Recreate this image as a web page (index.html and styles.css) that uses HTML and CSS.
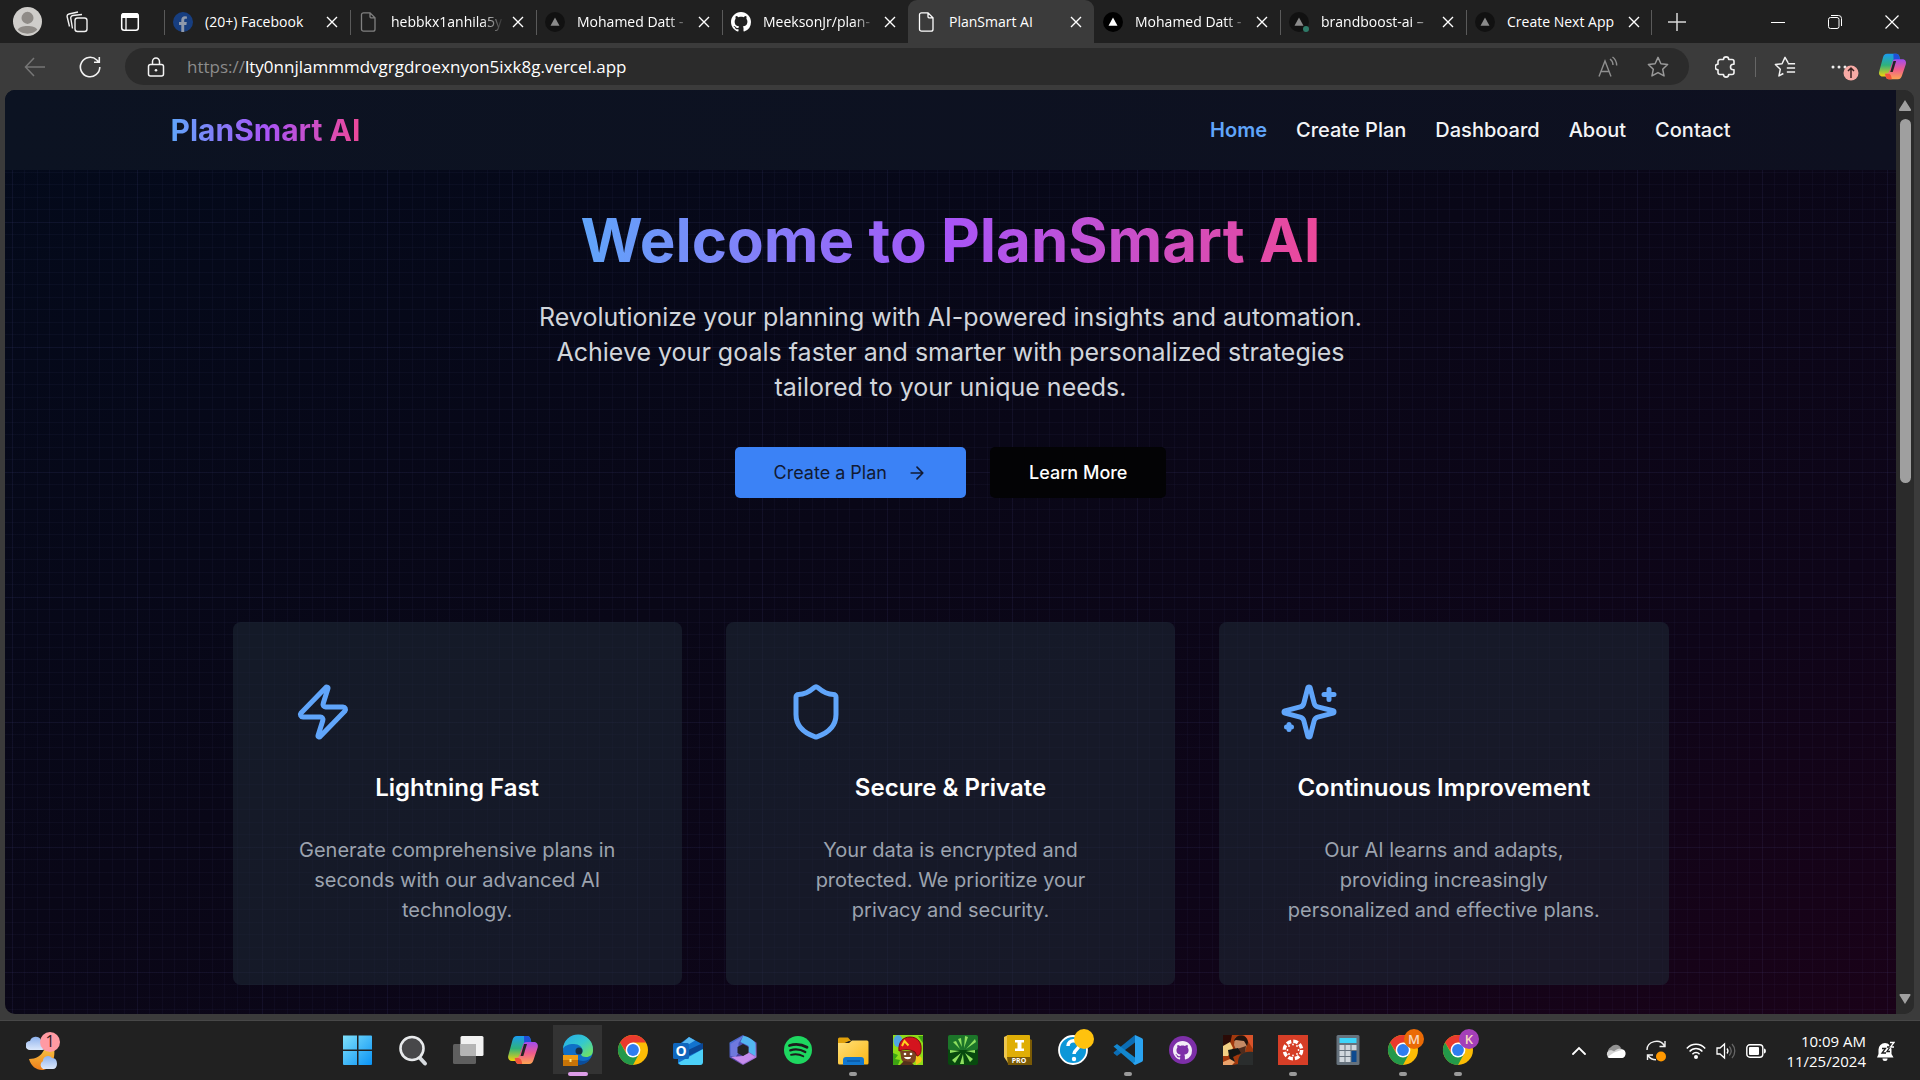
FILE: index.html
```html
<!DOCTYPE html>
<html lang="en">
<head>
<meta charset="utf-8">
<meta name="viewport" content="width=device-width, initial-scale=1">
<title>PlanSmart AI</title>
<link rel="stylesheet" href="styles.css">
</head>
<body>
<svg class="defs" aria-hidden="true">
  <defs>
    <linearGradient id="cp-a" x1="0" y1="0" x2="0" y2="1"><stop offset="0" stop-color="#1a9bf0"/><stop offset=".5" stop-color="#2fb27c"/><stop offset="1" stop-color="#f4d20c"/></linearGradient>
    <linearGradient id="cp-b" x1="0" y1="0" x2="0" y2="1"><stop offset="0" stop-color="#a04cf0"/><stop offset=".5" stop-color="#ee5a8e"/><stop offset="1" stop-color="#fda652"/></linearGradient>
    <linearGradient id="win" x1="0" y1="0" x2="1" y2="1"><stop offset="0" stop-color="#7fe0fb"/><stop offset="1" stop-color="#0a93f5"/></linearGradient>
    <linearGradient id="edge-a" x1="0" y1="0" x2="1" y2="1"><stop offset="0" stop-color="#27a9e8"/><stop offset=".5" stop-color="#33c8cf"/><stop offset="1" stop-color="#7ee84b"/></linearGradient>
    <linearGradient id="folder" x1="0" y1="0" x2="1" y2="1"><stop offset="0" stop-color="#ffe07a"/><stop offset="1" stop-color="#fbb714"/></linearGradient>
    <linearGradient id="m365" x1="0" y1="0" x2="1" y2="1"><stop offset="0" stop-color="#4a7fe6"/><stop offset=".5" stop-color="#4c3f9e"/><stop offset="1" stop-color="#c98af0"/></linearGradient>
    <linearGradient id="moon" x1="0" y1="0" x2="0" y2="1"><stop offset="0" stop-color="#f6c343"/><stop offset="1" stop-color="#ef7d1a"/></linearGradient>
    <linearGradient id="cloud" x1="0" y1="0" x2="0" y2="1"><stop offset="0" stop-color="#8fb3ee"/><stop offset="1" stop-color="#dce8fb"/></linearGradient>
  </defs>
  <symbol id="i-close" viewBox="0 0 12 12"><path d="M1 1l10 10M11 1L1 11" fill="none" stroke="currentColor" stroke-width="1.4"/></symbol>
  <symbol id="i-page" viewBox="0 0 20 20"><path d="M4.500 .8h6.500l5 5v11.400a2 2 0 0 1-2 2h-9.500a2 2 0 0 1-2-2v-14.400a2 2 0 0 1 2-2zM11 1v3.800a1 1 0 0 0 1 1h4" fill="none" stroke="currentColor" stroke-width="1.300"/></symbol>
  <symbol id="i-vercel" viewBox="0 0 20 20"><circle cx="10" cy="10" r="10" fill="#111"/><path d="M10 5.500l4.500 8.200h-9z" fill="#8a8a8a"/></symbol>
  <symbol id="i-vercel-on" viewBox="0 0 20 20"><circle cx="10" cy="10" r="10" fill="#000"/><path d="M10 5.500l4.500 8.200h-9z" fill="#fff"/></symbol>
  <symbol id="i-github" viewBox="0 0 16 16"><path fill="currentColor" d="M8 0C3.580 0 0 3.580 0 8c0 3.540 2.290 6.530 5.470 7.590.4.070.55-.17.55-.38 0-.19-.01-.82-.01-1.490-2.010.37-2.530-.49-2.690-.94-.09-.23-.48-.94-.82-1.130-.28-.15-.68-.52-.01-.53.63-.01 1.080.58 1.230.82.72 1.210 1.870.87 2.330.66.070-.52.28-.87.51-1.070-1.780-.2-3.640-.89-3.640-3.950 0-.87.31-1.590.82-2.150-.08-.2-.36-1.020.08-2.120 0 0 .67-.21 2.200.82.64-.18 1.320-.27 2-.27s1.360.09 2 .27c1.530-1.040 2.200-.82 2.200-.82.44 1.100.16 1.920.08 2.120.51.56.82 1.270.82 2.150 0 3.070-1.870 3.750-3.650 3.950.29.25.54.73.54 1.480 0 1.070-.01 1.930-.01 2.200 0 .21.15.46.55.38A8.010 8.010 0 0 0 16 8c0-4.420-3.580-8-8-8z"/></symbol>
  <symbol id="i-copilot" viewBox="0 0 32 32">
    <path d="M10 2h10c2 0 3 1 3.500 3l1 4h-5c-2 0-3 1-3.500 3l-4 12c-.6 2-1.500 3-3.500 3H5c-3 0-4.500-2.500-3.700-5.500L5.500 6C6.300 3.300 7.500 2 10 2z" fill="url(#cp-a)"/>
    <path d="M17 2h3c2 0 3 1 3.500 3l1 4h-5c-1 0-1.800.3-2.300.8z" fill="#1f4fd8"/>
    <path d="M22 30H12c-2 0-3-1-3.500-3l-.8-3c3 0 4.300-1 5-3.500l3.300-9.700c.6-2 1.500-2.800 3.500-2.800h7.500c3 0 4.500 2.500 3.700 5.500L26.500 26C25.700 28.700 24.500 30 22 30z" fill="url(#cp-b)"/>
    <path d="M12 30c-2 0-3-1-3.500-3l-.8-3h3.500c2.500 0 3.500 2 4 6z" fill="#f0533a"/>
    <path d="M17 10l-3.500 12h2.800L20 10z" fill="#242424"/>
  </symbol>
  <symbol id="i-chrome" viewBox="0 0 32 32">
    <circle cx="16" cy="16" r="15" fill="#fbbc05"/>
    <path d="M3 8.500A15 15 0 0 1 29 8.500H16L10 19.500z" fill="#ea3a2e"/>
    <path d="M3 8.500A15 15 0 0 0 16 31l6.200-11.500L9.500 19.800z" fill="#23994a"/>
    <circle cx="16" cy="16" r="7.400" fill="#fff"/><circle cx="16" cy="16" r="5.900" fill="#2f7df0"/>
  </symbol>
</svg>

<header class="browser">
  <div class="tabstrip">
    <div class="strip-tools">
      <button class="bare" aria-label="Profile"><svg width="29" height="29" viewBox="0 0 28 28"><circle cx="14" cy="14" r="14" fill="#cfcdca"/><circle cx="14" cy="10.500" r="5.800" fill="#8f8b87"/><path d="M4.500 22c1.500-5 17.500-5 19 0a14 14 0 0 1-19 0z" fill="#8f8b87"/></svg></button>
      <button class="bare" aria-label="Workspaces"><svg width="22" height="22" viewBox="0 0 22 22" fill="none" stroke="#f0f0f0" stroke-width="1.400"><rect x="9" y="7" width="12" height="13.500" rx="2.500"/><path d="M6.500 17.500L4.800 7.500a2.500 2.500 0 0 1 2-3L16 3.500M3.500 15.500L1.200 6a2.500 2.500 0 0 1 1.800-3L12 1"/></svg></button>
      <button class="bare" aria-label="Tab actions"><svg width="20" height="20" viewBox="0 0 20 20"><rect x="1.700" y="1.700" width="16.600" height="16.600" rx="2.500" fill="none" stroke="#fff" stroke-width="1.500"/><path d="M1.500 3a2 2 0 0 1 2-2h13a2 2 0 0 1 2 2v3h-17z" fill="#fff"/><path d="M6 6v12" stroke="#fff" stroke-width="1.300"/></svg></button>
    </div>
    <nav class="tabs" aria-label="Open tabs">
      <div class="tab"><button class="tab-main"><svg class="fav" viewBox="0 0 20 20"><circle cx="10" cy="10" r="10" fill="#173e80"/><path d="M8.300 20v-7H6v-3h2.300V8c0-2.500 1.400-3.800 3.600-3.800l2 .2v2.400h-1.200c-1.200 0-1.500.7-1.500 1.500V10h2.600l-.4 3h-2.200v7z" fill="#8f99ab"/></svg><span class="tab-title">(20+) Facebook</span></button><button class="tab-x" aria-label="Close tab"><svg><use href="#i-close"/></svg></button></div>
      <div class="tab"><button class="tab-main"><svg class="fav dim"><use href="#i-page"/></svg><span class="tab-title faded">hebbkx1anhila5y</span></button><button class="tab-x" aria-label="Close tab"><svg><use href="#i-close"/></svg></button></div>
      <div class="tab"><button class="tab-main"><svg class="fav"><use href="#i-vercel"/></svg><span class="tab-title faded">Mohamed Datt -</span></button><button class="tab-x" aria-label="Close tab"><svg><use href="#i-close"/></svg></button></div>
      <div class="tab"><button class="tab-main"><svg class="fav"><use href="#i-github"/></svg><span class="tab-title faded">MeeksonJr/plan-</span></button><button class="tab-x" aria-label="Close tab"><svg><use href="#i-close"/></svg></button></div>
      <div class="tab active"><button class="tab-main"><svg class="fav"><use href="#i-page"/></svg><span class="tab-title">PlanSmart AI</span></button><button class="tab-x" aria-label="Close tab"><svg><use href="#i-close"/></svg></button></div>
      <div class="tab"><button class="tab-main"><svg class="fav"><use href="#i-vercel-on"/></svg><span class="tab-title faded">Mohamed Datt -</span></button><button class="tab-x" aria-label="Close tab"><svg><use href="#i-close"/></svg></button></div>
      <div class="tab"><button class="tab-main"><svg class="fav" viewBox="0 0 20 20"><circle cx="10" cy="10" r="10" fill="#111"/><path d="M10 5.500l4.500 8.200h-9z" fill="#8a8a8a"/><circle cx="17" cy="17" r="3" fill="#2e7a68"/></svg><span class="tab-title faded">brandboost-ai –</span></button><button class="tab-x" aria-label="Close tab"><svg><use href="#i-close"/></svg></button></div>
      <div class="tab"><button class="tab-main"><svg class="fav"><use href="#i-vercel"/></svg><span class="tab-title">Create Next App</span></button><button class="tab-x" aria-label="Close tab"><svg><use href="#i-close"/></svg></button></div>
    </nav>
    <button class="bare new-tab" aria-label="New tab"><svg width="18" height="18" viewBox="0 0 18 18"><path d="M9 0v18M0 9h18" stroke="#d8d8d8" stroke-width="1.500"/></svg></button>
    <div class="window-buttons">
      <button class="bare" aria-label="Minimize"><svg width="14" height="14" viewBox="0 0 14 14"><path d="M0 7.500h14" stroke="#fff"/></svg></button>
      <button class="bare" aria-label="Restore"><svg width="14" height="14" viewBox="0 0 14 14" fill="none" stroke="#fff"><rect x=".5" y="2.500" width="10.500" height="11" rx="2"/><path d="M3 .5h7.500a3 3 0 0 1 3 3V11"/></svg></button>
      <button class="bare" aria-label="Close"><svg width="14" height="14" viewBox="0 0 14 14"><path d="M.5.5l13 13M13.500.5l-13 13" stroke="#fff" stroke-width="1.200"/></svg></button>
    </div>
  </div>

  <div class="toolbar">
    <button class="bare back" aria-label="Back"><svg width="22" height="20" viewBox="0 0 22 20" fill="none" stroke="#767676" stroke-width="1.500"><path d="M21 10H1.500M10 1L1.500 10l8.500 9"/></svg></button>
    <button class="bare refresh" aria-label="Refresh"><svg width="22" height="22" viewBox="0 0 22 22" fill="none" stroke="#f2f2f2" stroke-width="1.600"><path d="M20.800 11a9.700 9.700 0 1 1-3-7l2 2M20.300 1v5.300H15"/></svg></button>
    <form class="address">
      <button type="button" class="bare lock" aria-label="Site information"><svg width="18" height="20" viewBox="0 0 18 20" fill="none" stroke="#f4f4f4" stroke-width="1.500"><rect x="1.500" y="7.500" width="15" height="11.500" rx="2"/><path d="M5.500 7.500V4.500a3.500 3.500 0 0 1 7 0v3"/><circle cx="9" cy="13.300" r="1.300" fill="#f4f4f4" stroke="none"/></svg></button>
      <label for="url">https://</label>
      <input id="url" type="text" value="lty0nnjlammmdvgrgdroexnyon5ixk8g.vercel.app">
      <button type="button" class="bare" aria-label="Read aloud"><svg width="20" height="22" viewBox="0 0 20 22" fill="none" stroke="#8e8e8e" stroke-width="1.400"><path d="M1 20.500L7 5l6 15.500M3 15.500h8M12 3c2 1.500 3 3.300 3 6M14.500 1c3 2.200 4.200 5 4.200 8.500"/></svg></button>
      <button type="button" class="bare" aria-label="Add to favorites"><svg width="22" height="22" viewBox="0 0 24 24" fill="none" stroke="#9a9a9a" stroke-width="1.600" stroke-linejoin="round"><path d="M12 1.500l3.200 6.900 7.300.9-5.400 5.100 1.500 7.400L12 18.100l-6.600 3.700 1.500-7.400L1.500 9.300l7.300-.9z"/></svg></button>
    </form>
    <div class="actions">
      <button class="bare" aria-label="Extensions"><svg width="22" height="24" viewBox="0 0 22 24" fill="none" stroke="#f2f2f2" stroke-width="1.600" stroke-linejoin="round"><path d="M5 4.500h3.500a2.600 2.600 0 0 1 5.200 0h3.300a2 2 0 0 1 2 2v2.800h-.8a2.700 2.700 0 0 0 0 5.400h.8v2.800a2 2 0 0 1-2 2h-3.300a2.600 2.600 0 0 1-5.200 0H5a2 2 0 0 1-2-2v-2.800a2.700 2.700 0 0 1 0-5.400V6.500a2 2 0 0 1 2-2z"/></svg></button>
      <span class="rule"></span>
      <button class="bare" aria-label="Favorites"><svg width="22" height="22" viewBox="0 0 24 24" fill="none" stroke="#f2f2f2" stroke-width="1.600" stroke-linejoin="round"><path d="M15.500 7.500L12 1.500 8.800 8.400l-7.300.9 5.400 5.100-1.500 7.400 4.800-2.700M15 8.500h8M14 13h9M14 17.500h9"/></svg></button>
      <button class="bare more" aria-label="Settings and more"><svg width="28" height="28" viewBox="0 0 28 28"><circle cx="2" cy="14" r="1.500" fill="#eee"/><circle cx="8" cy="14" r="1.500" fill="#eee"/><circle cx="14" cy="14" r="1.500" fill="#eee"/><circle cx="20" cy="20" r="7.500" fill="#f7aaa5"/><path d="M20 25v-9.500M17 18l3-3 3 3" fill="none" stroke="#3b2222" stroke-width="1.500"/></svg></button>
      <button class="bare" aria-label="Copilot"><svg width="29" height="29"><use href="#i-copilot"/></svg></button>
    </div>
  </div>
</header>

<div class="viewport">
  <div class="site">
    <header class="site-header">
      <div class="site-header-inner">
        <a class="logo gradient" href="#">PlanSmart AI</a>
        <nav class="site-nav" aria-label="Main">
          <a class="current" href="#">Home</a>
          <a href="#">Create Plan</a>
          <a href="#">Dashboard</a>
          <a href="#">About</a>
          <a href="#">Contact</a>
        </nav>
      </div>
    </header>
    <main>
      <section class="hero">
        <h1 class="gradient">Welcome to PlanSmart AI</h1>
        <p>Revolutionize your planning with AI-powered insights and automation. Achieve your goals faster and smarter with personalized strategies tailored to your unique needs.</p>
        <div class="cta">
          <button class="btn primary">Create a Plan <svg width="20" height="20" viewBox="0 0 24 24" fill="none" stroke="currentColor" stroke-width="2" stroke-linecap="round" stroke-linejoin="round"><path d="M5 12h14M12 5l7 7-7 7"/></svg></button>
          <button class="btn dark">Learn More</button>
        </div>
      </section>
      <section class="cards">
        <article class="card">
          <svg viewBox="0 0 24 24"><path d="M4 14a1 1 0 0 1-.78-1.630l9.900-10.200a.5.5 0 0 1 .86.460l-1.920 6.020A1 1 0 0 0 13 10h7a1 1 0 0 1 .78 1.630l-9.900 10.200a.5.5 0 0 1-.86-.460l1.920-6.020A1 1 0 0 0 11 14z"/></svg>
          <h2>Lightning Fast</h2>
          <p>Generate comprehensive plans in seconds with our advanced AI technology.</p>
        </article>
        <article class="card">
          <svg viewBox="0 0 24 24"><path d="M20 13c0 5-3.500 7.500-7.660 8.950a1 1 0 0 1-.67-.01C7.500 20.500 4 18 4 13V6a1 1 0 0 1 1-1c2 0 4.500-1.200 6.240-2.720a1.170 1.170 0 0 1 1.520 0C14.510 3.810 17 5 19 5a1 1 0 0 1 1 1z"/></svg>
          <h2>Secure &amp; Private</h2>
          <p>Your data is encrypted and protected. We prioritize your privacy and security.</p>
        </article>
        <article class="card">
          <svg viewBox="0 0 24 24"><path d="M9.937 15.500A2 2 0 0 0 8.500 14.063l-6.135-1.582a.5.5 0 0 1 0-.962L8.500 9.936A2 2 0 0 0 9.937 8.500l1.582-6.135a.5.5 0 0 1 .963 0L14.063 8.500A2 2 0 0 0 15.500 9.937l6.135 1.581a.5.5 0 0 1 0 .964L15.500 14.063a2 2 0 0 0-1.437 1.437l-1.582 6.135a.5.5 0 0 1-.963 0zM20 3v4M22 5h-4M4 17v2M5 18H3"/></svg>
          <h2>Continuous Improvement</h2>
          <p>Our AI learns and adapts, providing increasingly personalized and effective plans.</p>
        </article>
      </section>
    </main>
  </div>
  <div class="scrollbar" aria-hidden="true">
    <svg width="12" height="11" viewBox="0 0 12 11"><path d="M6 0l6 9.500a1 1 0 0 1-1 1.500H1a1 1 0 0 1-1-1.500z" fill="#a0a0a0"/></svg>
    <div class="track"><div class="thumb"></div></div>
    <svg width="12" height="10" viewBox="0 0 12 11"><path d="M6 11l6-9.500A1 1 0 0 0 11 0H1a1 1 0 0 0-1 1.500z" fill="#a0a0a0"/></svg>
  </div>
</div>

<footer class="taskbar">
  <div class="widgets">
    <button class="bare" aria-label="Weather"><svg width="36" height="44" viewBox="0 0 36 44"><path d="M3 30c7 0 12-3 15-9l10-2c2 12-4 22-12 22-6 0-11-4-13-11z" fill="url(#moon)"/><path d="M4 21a4.500 4.500 0 0 1 0-9 6 6 0 0 1 11-1c4 0 5 2 5 5s-2 5-4 5z" fill="url(#cloud)"/><path d="M17 40a4.500 4.500 0 0 1 0-8 5 5 0 0 1 9-3c4 0 5 3 5 6s-2 5-4 5z" fill="url(#cloud)"/><circle cx="24" cy="13" r="10" fill="#ff9aa3"/><text x="24" y="18" text-anchor="middle" class="badge-num">1</text></svg></button>
  </div>
  <div class="apps">
    <button class="app" aria-label="Start"><svg viewBox="0 0 32 32"><path fill="url(#win)" d="M1 1.500h14v14H1zM16.500 1.500H29a1 1 0 0 1 1 1v13H16.500zM1 17h14v14H2a1 1 0 0 1-1-1zM16.500 17H30v13a1 1 0 0 1-1 1H16.500z"/></svg></button>
    <button class="app" aria-label="Search"><svg viewBox="0 0 32 32"><path d="M22 23l6 6.500" stroke="#d6dade" stroke-width="4" stroke-linecap="round"/><circle cx="15" cy="14.500" r="11.500" fill="#48484a" stroke="#e8eaec" stroke-width="2.600"/></svg></button>
    <button class="app" aria-label="Task view"><svg viewBox="0 0 32 32"><rect x="1" y="10" width="23" height="20" rx="1.500" fill="#5f5f5f"/><rect x="8.500" y="2" width="23" height="20" rx="1.500" fill="#f2f2f2"/><path d="M8.500 10H24v12H9.500a1 1 0 0 1-1-1z" fill="#b5b5b5"/></svg></button>
    <button class="app" aria-label="Copilot"><svg><use href="#i-copilot"/></svg></button>
    <button class="app running focused" aria-label="Microsoft Edge"><svg viewBox="0 0 32 32"><circle cx="16" cy="16" r="15" fill="#0f6fc6"/><path d="M1 15a15 15 0 0 1 30 1c0 5-3 7-7 7-3 0-5-1-5-3 1-1 1.500-2 1.500-3.500C20.500 13 17 10 12 10 6 10 2 12 1 15z" fill="url(#edge-a)"/><path d="M13 20c0 4 3 7 8 7 3 0 5-1 7.500-2.500C26 29 21 31 16 31l-5-6z" fill="#0b4d9b"/><circle cx="17" cy="17" r="3.500" fill="#16324a"/><rect x="1" y="21" width="15" height="11" fill="#c87408"/><path d="M1 21h15v5H1z" fill="#ed9c14"/><rect x="7.500" y="25" width="2" height="3" fill="#ffe27a"/></svg></button>
    <button class="app" aria-label="Chrome"><svg><use href="#i-chrome"/></svg></button>
    <button class="app" aria-label="Outlook"><svg viewBox="0 0 32 32"><path d="M6 11L17 3l13 7v19a2 2 0 0 1-2 2H9a3 3 0 0 1-3-3z" fill="#1273cf"/><path d="M9 10l8-7 6 3.500L9 15z" fill="#57b8f2"/><path d="M14 17l17-8v6L14 23z" fill="#0a4796"/><path d="M6 29l25-14v13a3 3 0 0 1-3 3H9z" fill="#4cd0f8"/><rect x="1" y="9" width="16" height="16" rx="1.500" fill="#0f66bd"/><text x="9" y="22" text-anchor="middle" class="app-letter">O</text></svg></button>
    <button class="app" aria-label="Microsoft 365"><svg viewBox="0 0 32 32"><path d="M16 2l12.500 7v14L16 30 3.500 23V9z" fill="url(#m365)" stroke="url(#m365)" stroke-width="2" stroke-linejoin="round"/><path d="M16 2c5 0 12.500 5 12.500 8v12l-7-4v-6l-8-4z" fill="#52b6f0"/><path d="M3.500 10v12l5 1 3-4V9L16 2z" fill="#6f79dd"/><path d="M4 23l12 7 12-7-7-5-5 4z" fill="#c68cec"/><path d="M16 10l5.500 3v6L16 22l-5.500-3v-6z" fill="#242424"/></svg></button>
    <button class="app" aria-label="Spotify"><svg viewBox="0 0 32 32"><circle cx="16" cy="16" r="14" fill="#1ed760"/><g fill="none" stroke="#1c1c1c" stroke-linecap="round"><path d="M7.500 11.500c6-1.800 12.500-1 17.500 1.800" stroke-width="2.800"/><path d="M8.300 16.300c5-1.500 10.500-.8 15 1.700" stroke-width="2.300"/><path d="M9 20.800c4.500-1.200 8.500-.7 12.300 1.500" stroke-width="1.900"/></g></svg></button>
    <button class="app running" aria-label="File Explorer"><svg viewBox="0 0 32 32"><path d="M1 5a1.500 1.500 0 0 1 1.500-1.500H11l3 3.500h-2L1 12z" fill="#e0a00a"/><path d="M1 9h11l3-2.500h15A1.500 1.500 0 0 1 31.500 8v21a1.500 1.500 0 0 1-1.500 1.500H2.500A1.500 1.500 0 0 1 1 29z" fill="url(#folder)"/><path d="M6 31v-5a3 3 0 0 1 3-3h15a3 3 0 0 1 3 3v5z" fill="#1177cf"/><path d="M10 27h13" stroke="#0a4f98" stroke-width="1.200"/></svg></button>
    <button class="app" aria-label="Bloons TD"><svg viewBox="0 0 32 32"><path d="M1 1h30v30H1z" fill="#8fdc18"/><path d="M1 19l5 2-3 4 5 1-2 5H1zM26 2h5v7z" fill="#3da313"/><ellipse cx="6" cy="7" rx="4.500" ry="6" fill="#4fa5e4"/><path d="M23 22c6-1 8 2 6 6l-5 3z" fill="#f5c518"/><path d="M8 17h16v6c0 5-3 7-7 7s-8-3-8-7z" fill="#7a4423"/><path d="M12 23h7c0 3-6 3-7 0z" fill="#fff"/><circle cx="13" cy="20" r="1.300" fill="#fff"/><circle cx="19" cy="20" r="1.300" fill="#fff"/><path d="M7 17C6 8 11 3 18 3c8 0 12 6 11 13 0 4-2 6-4 6l-2-4C18 15 12 15 7 17z" fill="#d4141e" stroke="#7d0710"/><path d="M10 12l2.500-5 4 4.500" fill="none" stroke="#ffd21f" stroke-width="2"/><path d="M8 31l4-4 7 1 3 3z" fill="#54301b"/></svg></button>
    <button class="app" aria-label="Green burst"><svg viewBox="0 0 32 32"><rect x="1" y="1" width="30" height="30" rx="2" fill="#07490e"/><rect x="1" y="1" width="30" height="15" rx="2" fill="#1c7529"/><path fill="#8fe05f" d="M17 14l1-12 3 1zM19 15l9-10 1 3zM19 17l9-1v3zM18 19l8 6-3 3zM16 20l1 10h-4zM14 19l-6 10-3-3zM13 17l-10 2v-3zM13 15L6 8l3-1zM15 13L11 5l3-1z"/></svg></button>
    <button class="app" aria-label="Inventor Pro"><svg viewBox="0 0 32 32"><path d="M2 3l4-2v28l-4-6z" fill="#eec64d"/><path d="M6 1h21a1 1 0 0 1 1 1v21H5V2z" fill="#dfae06"/><path d="M28 5l2 1v25H6l-1-8h23z" fill="#7a5a05"/><path d="M13 6h9v2.500h-2.500v6H22V17h-9v-2.500h2.500v-6H13z" fill="#fff"/><text x="17" y="29" text-anchor="middle" class="pro-letter">PRO</text></svg></button>
    <button class="app" aria-label="Help"><svg viewBox="0 0 32 32"><circle cx="16" cy="16" r="14" fill="#0d97d8" stroke="#fff" stroke-width="1.800"/><path d="M11 12c0-7 11-7 11-.5 0 4-5 4-5 8.500" fill="none" stroke="#fff" stroke-width="3.500"/><circle cx="17" cy="25" r="2.200" fill="#fff"/><circle cx="27" cy="5" r="10" fill="#ffc20e"/></svg></button>
    <button class="app running" aria-label="Visual Studio Code"><svg viewBox="0 0 32 32"><path d="M2 19.500l3 2.500L23 8.500V1L1.500 18.500z" fill="#0b6db5"/><path d="M1.500 12.500L5 10l18 13.500V31z" fill="#1387cf"/><path d="M23 1l6.500 3a2 2 0 0 1 1.500 2v20a2 2 0 0 1-1.500 2L23 31l-2-2 2-1z" fill="#2aa3f1"/></svg></button>
    <button class="app" aria-label="GitHub Desktop"><svg viewBox="0 0 32 32"><circle cx="16" cy="16" r="14" fill="#7d2fa8"/><svg x="6" y="7" width="19" height="19" color="#f2edf7"><use href="#i-github"/></svg></svg></button>
    <button class="app" aria-label="Shooter game"><svg viewBox="0 0 32 32"><path d="M1 1h30v30H1z" fill="#a2380c"/><path d="M1 1h9L7 14 1 20z" fill="#2a0a06"/><path d="M22 1h9v14z" fill="#d9532a"/><path d="M1 12l7-4 3 6-5 8H1z" fill="#f2cf83"/><path d="M16 30c0-9 4-13 15-12v13H10z" fill="#2a2d2d"/><path d="M13 4c6-4 13-1 12 6l-2 8-7 2-4-9z" fill="#c58a64"/><path d="M12 7c1-7 13-8 14 1l-1 4-3-5-8-1z" fill="#21140e"/><path d="M15 15l9-3-1 7-7 2z" fill="#4e2c1d"/><path d="M6 16l10-2 3 5-8 4 2 5-4 1-2-7z" fill="#141614"/><path d="M1 28l7-3 5 3-3 3H1z" fill="#eaa26b"/></svg></button>
    <button class="app running" aria-label="Canvas"><svg viewBox="0 0 32 32"><path d="M1 1h30v30H1z" fill="#d63e27"/><circle cx="16" cy="16" r="8.700" fill="none" stroke="#fff" stroke-width="3.400" stroke-dasharray="4.800 2.033"/><g fill="#fff"><circle cx="16" cy="10.500" r=".9"/><circle cx="16" cy="21.500" r=".9"/><circle cx="10.500" cy="16" r=".9"/><circle cx="21.500" cy="16" r=".9"/><circle cx="12" cy="12" r=".9"/><circle cx="20" cy="12" r=".9"/><circle cx="12" cy="20" r=".9"/><circle cx="20" cy="20" r=".9"/></g></svg></button>
    <button class="app" aria-label="Calculator"><svg viewBox="0 0 32 32"><rect x="4.500" y="1" width="23" height="30" rx="1.500" fill="#66727d"/><rect x="7.500" y="4" width="17" height="5" fill="#3cd5fa"/><path fill="#d0d7dd" d="M7.500 11h5v5h-5zM13.500 11h5v5h-5zM19.500 11h5v5h-5zM7.500 17h5v5h-5zM13.500 17h5v5h-5zM7.500 23h5v5h-5zM13.500 23h5v5h-5z"/><path d="M19.500 17h5v11h-5z" fill="#0d4a8f"/></svg></button>
    <button class="app running" aria-label="Chrome, profile M"><svg viewBox="0 0 32 32"><use href="#i-chrome"/><circle cx="27" cy="5" r="10" fill="#ea6a05"/><text x="27" y="10" text-anchor="middle" class="badge-letter">M</text></svg></button>
    <button class="app running" aria-label="Chrome, profile K"><svg viewBox="0 0 32 32"><use href="#i-chrome"/><circle cx="27" cy="5" r="10" fill="#a43fb8"/><text x="27" y="10" text-anchor="middle" class="badge-letter">K</text></svg></button>
  </div>
  <div class="tray">
    <button class="bare" aria-label="Hidden icons"><svg width="14" height="10" viewBox="0 0 14 10"><path d="M1 8l6-6 6 6" fill="none" stroke="#fff" stroke-width="1.800" stroke-linecap="round"/></svg></button>
    <button class="bare" aria-label="OneDrive"><svg width="20" height="14" viewBox="0 0 20 14"><path d="M2.500 10A5 5 0 0 1 5 3a6 6 0 0 1 10 1l-7 5z" fill="#929292"/><path d="M4 14a4 4 0 0 1-1-7.500c2-.8 4 0 5 1 3-3 7-4 8.500-2A4.500 4.500 0 0 1 16 14z" fill="#d4d4d4"/><path d="M8 8.500L17 5.600A4.500 4.500 0 0 1 16 14H4a4 4 0 0 1-2.500-1z" fill="#fff"/></svg></button>
    <button class="bare" aria-label="Windows Update"><svg width="20" height="22" viewBox="0 0 20 22" fill="none" stroke="#f2f2f2" stroke-width="1.400"><path d="M1 10c0-9 13-12 17.500-4M19 1v5.500h-5.500M1.500 20v-5H7M2 15.500c2 3 4.500 4.300 8 4.300"/><circle cx="15" cy="16.500" r="5" fill="#ff9800" stroke="none"/></svg></button>
    <button class="bare system" aria-label="Network, volume and battery">
      <svg width="20" height="16" viewBox="0 0 20 16" fill="none" stroke="#fff" stroke-width="1.500"><path d="M.8 5.500c5-5.600 13.400-5.600 18.400 0M3.600 8.500c3.600-4 9.200-4 12.800 0M6.400 11.300c2.200-2.300 5-2.300 7.200 0"/><circle cx="10" cy="14" r="2" fill="#fff" stroke="none"/></svg>
      <svg width="20" height="18" viewBox="0 0 20 18" fill="none" stroke="#fff" stroke-width="1.300"><path d="M1 6h3l4.500-4v14L4 12H1zM11 6.500c1.200 1.500 1.200 3.500 0 5"/><path d="M13.300 4.500c2.400 2.800 2.400 6.200 0 9M16 2c3.700 4 3.700 10 0 14" stroke="#666"/></svg>
      <svg width="20" height="14" viewBox="0 0 20 14"><rect x=".8" y=".8" width="16" height="12.400" rx="3" fill="none" stroke="#fff" stroke-width="1.400"/><rect x="3" y="3" width="10" height="8" rx="1" fill="#fff"/><path d="M18 4.500c2.500 0 2.500 5 0 5z" fill="#fff"/></svg>
    </button>
    <time class="clock" datetime="2024-11-25T10:09"><span>10:09 AM</span><span>11/25/2024</span></time>
    <button class="bare" aria-label="Notifications"><svg width="18" height="20" viewBox="0 0 18 20"><path d="M1.500 8.500a6.500 6.500 0 0 1 13 0V13l2 3.500H0L1.500 13z" fill="#fff"/><path d="M5.500 17.500h5a2.500 2.500 0 0 1-5 0z" fill="#fff"/><path d="M11 0h7v7h-5z" fill="#212121"/><path d="M5 7.500h3.500L5 12h4M10 6h3L10 10.500h3" fill="none" stroke="#1c1c1c" stroke-width="1.300"/><path d="M13 1.500h4L13.500 6H17" fill="none" stroke="#fff" stroke-width="1.300"/></svg></button>
  </div>
</footer>
</body>
</html>
```
FILE: styles.css
```css
* { box-sizing: border-box; }

body {
  margin: 0;
  height: 100vh;
  display: flex;
  flex-direction: column;
  overflow: hidden;
  background: #3b3b3b;
  color: #fff;
  font-family: "Open Sans", "Noto Sans", sans-serif;
}

.defs { position: absolute; width: 0; height: 0; }
svg { display: block; flex: none; }
button { font: inherit; color: inherit; cursor: pointer; }
a { color: inherit; text-decoration: none; }

.bare {
  display: flex;
  align-items: center;
  justify-content: center;
  padding: 0;
  border: 0;
  background: none;
}

/* Tab strip */
.tabstrip { display: flex; height: 43px; background: #202020; }
.strip-tools { display: grid; grid-template-columns: 54px 46px 60px; padding-right: 4px; }
.tabs { display: flex; min-width: 0; }

.tab {
  display: flex;
  align-items: center;
  width: 186px;
  min-width: 0;
  padding: 0 12px 0 9px;
  background: linear-gradient(#5a5a5a, #5a5a5a) 0 10px / 1px 25px no-repeat;
}
.tab:last-child {
  background:
    linear-gradient(#5a5a5a, #5a5a5a) 0 10px / 1px 25px no-repeat,
    linear-gradient(#5a5a5a, #5a5a5a) 100% 10px / 1px 25px no-repeat;
}
.tab.active { background: #3b3b3b; border-radius: 9px 9px 0 0; }
.tab.active + .tab { background: none; }

.tab-main {
  flex: 1;
  min-width: 0;
  display: flex;
  align-items: center;
  gap: 12px;
  padding: 0;
  border: 0;
  background: none;
  text-align: left;
}
.fav { width: 20px; height: 20px; }
.fav.dim { color: #808080; }
.tab-title {
  flex: 1;
  overflow: hidden;
  white-space: nowrap;
  font-size: 14px;
  line-height: 20px;
}
.tab-title.faded { mask-image: linear-gradient(90deg, #000 80%, transparent); }
.tab-x { padding: 0 0 0 8px; border: 0; background: none; }
.tab-x svg { width: 12px; height: 12px; }
.new-tab { width: 50px; }
.window-buttons { display: grid; grid-template-columns: repeat(3, 57px); margin-left: auto; }

/* Toolbar */
.toolbar { display: flex; align-items: center; height: 47px; background: #3b3b3b; }
.toolbar .back { width: 69px; height: 40px; }
.toolbar .refresh { width: 42px; height: 40px; margin-right: 14px; }

.address {
  flex: 1;
  display: flex;
  align-items: center;
  height: 37px;
  padding-right: 20px;
  border-radius: 19px;
  background: #2b2b2b;
  font-size: 17px;
}
.address .lock { width: 62px; }
.address label { color: #8c8c8c; }
.address input {
  flex: 1;
  min-width: 0;
  padding: 0;
  border: 0;
  outline: 0;
  background: none;
  color: #fff;
  font: inherit;
}
.address .bare + .bare { margin-left: 29px; }
.actions { display: flex; align-items: center; padding: 0 13px 0 26px; }
.rule { width: 1px; height: 20px; margin: 0 18px; background: #666; }
.more { margin: 0 19px 0 35px; }

/* Page viewport */
.viewport {
  flex: 1;
  min-height: 0;
  display: flex;
  margin: 0 6px 6px 5px;
  border-radius: 10px;
  overflow: hidden;
  background: #2b2b2b;
}
.site {
  flex: 1;
  overflow: hidden;
  font-family: Inter, sans-serif;
  background:
    linear-gradient(90deg, #6e70c80d 1px, transparent 1px) 7px 7px / 125px 125px,
    linear-gradient(#6e70c80d 1px, transparent 1px) 7px 7px / 125px 125px,
    linear-gradient(90deg, #6e70c80c 1px, transparent 1px 12px, #6e70c80c 12px 13px, transparent 13px) 7px 7px / 25px 25px,
    linear-gradient(#6e70c80c 1px, transparent 1px 12px, #6e70c80c 12px 13px, transparent 13px) 7px 7px / 25px 25px,
    linear-gradient(to bottom right, #030a1b, #090717 45%, #0e0518 75%, #1a0218);
}

.scrollbar {
  display: flex;
  flex-direction: column;
  align-items: center;
  gap: 8px;
  width: 18px;
  padding: 10px 0;
  background: #2b2b2b;
}
.track { flex: 1; }
.thumb { width: 11px; height: 42%; border-radius: 6px; background: #9f9f9f; }

.gradient {
  background: linear-gradient(90deg, #60a5fa, #a855f7 50%, #ec4899);
  background-clip: text;
  color: transparent;
}

.site-header { padding: 0 20px; background: linear-gradient(90deg, #0c1322, #0e1020); }
.site-header-inner {
  display: flex;
  align-items: center;
  justify-content: space-between;
  max-width: 1560px;
  height: 80px;
  margin: 0 auto;
}
.logo { font-size: 30px; font-weight: 700; line-height: 40px; }
.site-nav { display: flex; gap: 29px; font-size: 20px; font-weight: 500; line-height: 30px; color: #f3f4f6; }
.site-nav .current { color: #60a5fa; font-weight: 600; }

main { padding: 40px 20px; }
.hero { display: flex; flex-direction: column; align-items: center; text-align: center; }
.hero h1 { margin: 0 0 30px; font-size: 60px; font-weight: 700; line-height: 60px; }
.hero p { max-width: 840px; margin: 0 0 42px; font-size: 25px; line-height: 35px; color: #d1d5db; }

.cta { display: flex; gap: 24px; margin-bottom: 124px; }
.btn {
  display: flex;
  align-items: center;
  gap: 20px;
  height: 51px;
  padding: 0 39px;
  border: 0;
  border-radius: 5px;
  font-size: 18px;
  font-weight: 500;
}
.btn.primary { background: #3b82f6; color: #111a33; font-weight: 400; }
.btn.dark { background: #030305; color: #fff; }

.cards {
  display: grid;
  grid-template-columns: repeat(3, 1fr);
  gap: 44px;
  max-width: 1436px;
  margin: 0 auto;
}
.card { padding: 60px; border-radius: 8px; background: #1f29378c; text-align: center; }
.card svg {
  width: 60px;
  height: 60px;
  fill: none;
  stroke: #60a5fa;
  stroke-width: 2;
  stroke-linecap: round;
  stroke-linejoin: round;
}
.card h2 { margin: 31px -20px 32px; font-size: 24px; font-weight: 600; line-height: 30px; }
.card p { margin: 0; font-size: 20px; line-height: 30px; color: #9ca3af; }

/* Taskbar */
.taskbar {
  display: flex;
  align-items: center;
  height: 60px;
  background: #212121;
  border-top: 1px solid #484848;
}
.widgets { flex: 0 0 330px; padding-left: 26px; }
.apps { display: flex; }
.app {
  width: 55px;
  height: 59px;
  display: flex;
  flex-direction: column;
  align-items: center;
  gap: 6px;
  padding: 13px 0 0;
  border: 0;
  background: none;
}
.app > svg { width: 32px; height: 32px; overflow: visible; }
.app.running::after { content: ""; width: 8px; height: 4px; border-radius: 2px; background: #9a9a9a; }
.app.focused { background: linear-gradient(#333, #333) 50% 4px / 49px 49px no-repeat; }
.app.focused::after { width: 20px; background: #dd9ee8; }
.badge-num { font: 16px "Open Sans", sans-serif; fill: #33191c; }
.badge-letter { font: 600 13px "Open Sans", sans-serif; fill: #f7d8c0; }
.app-letter { font: 700 14px "Open Sans", sans-serif; fill: #fff; }
.pro-letter { font: 700 7px "Open Sans", sans-serif; fill: #fff; }

.tray { display: flex; align-items: center; gap: 20px; margin-left: auto; padding-right: 25px; }
.system { gap: 10px; }
.clock { display: flex; flex-direction: column; text-align: right; font-size: 15px; line-height: 20px; }
.clock + .bare { margin-left: -9px; }
```
